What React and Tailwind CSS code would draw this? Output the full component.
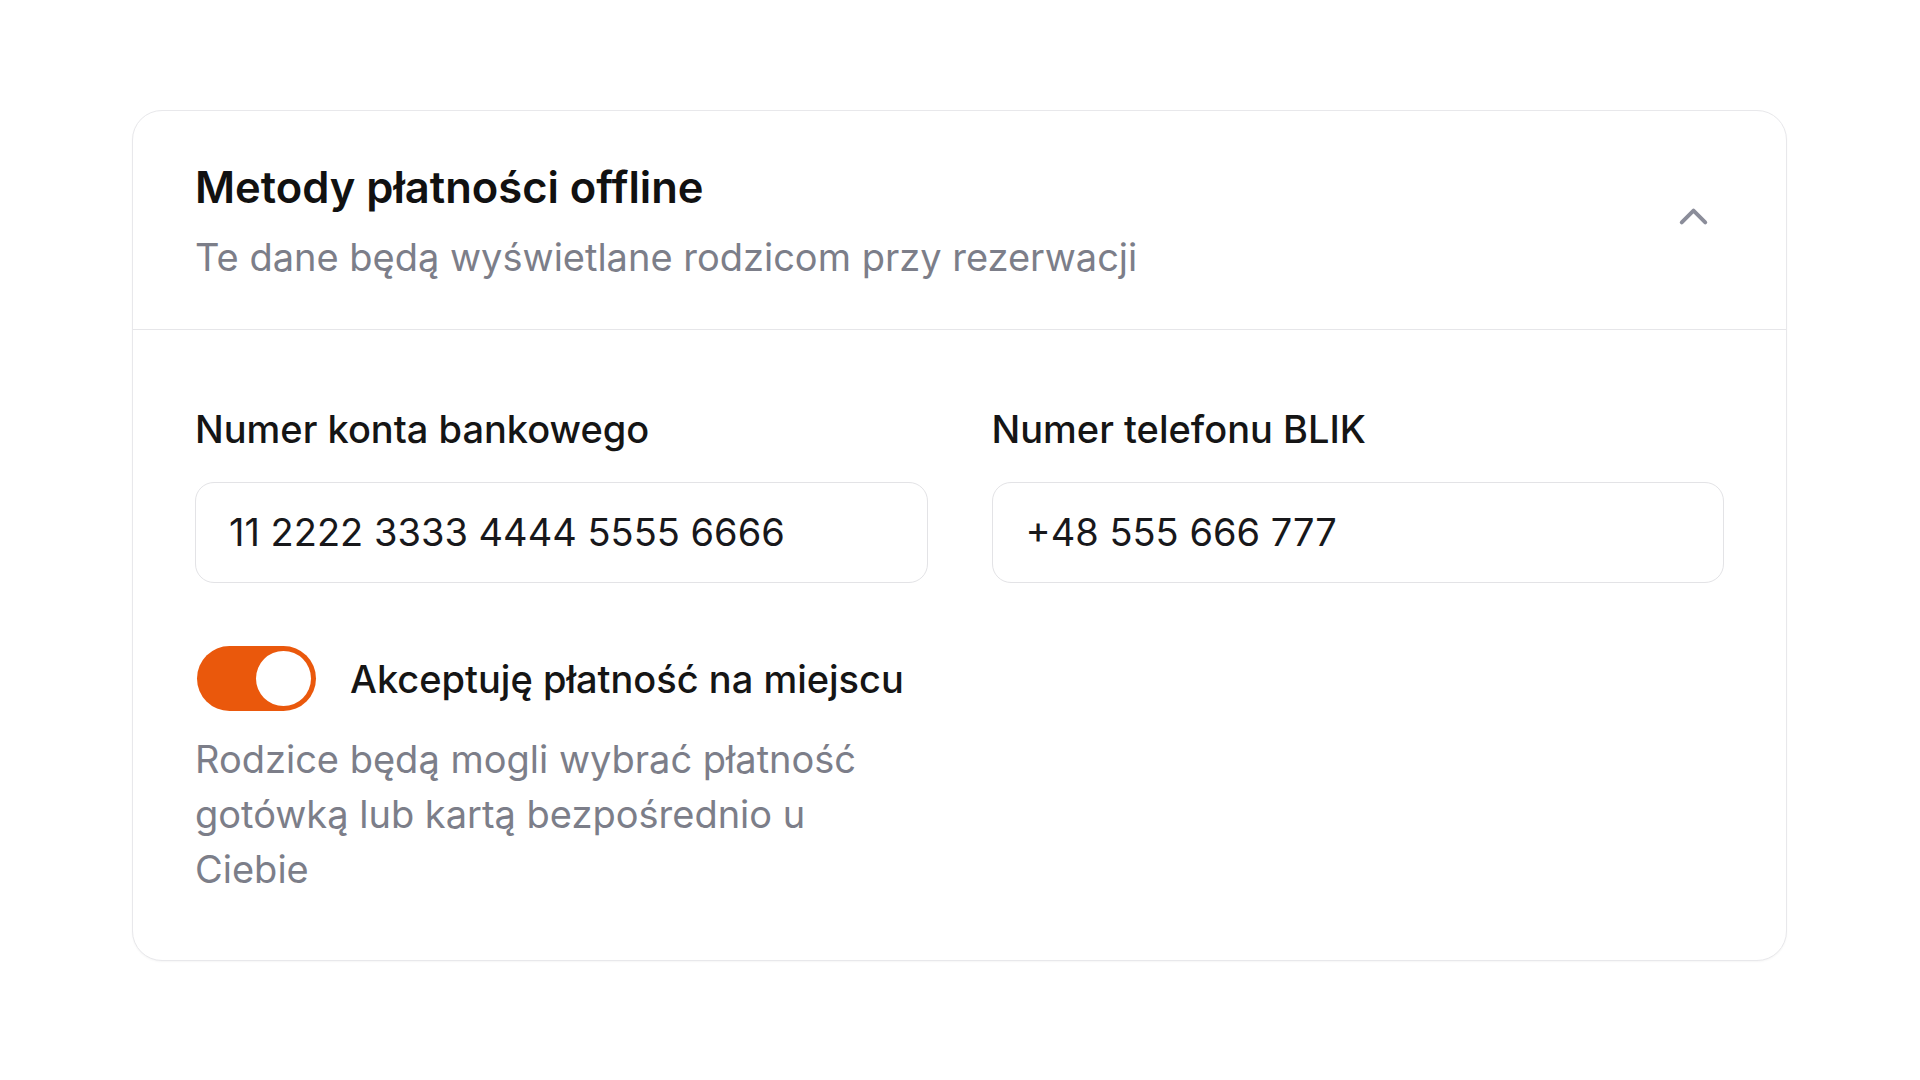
import React from "react";

function ChevronUp() {
  return (
    <svg width="47" height="47" viewBox="0 0 24 24" fill="none" stroke="#8b8d9a" strokeWidth="2" strokeLinecap="round" strokeLinejoin="round">
      <path d="m18 15-6-6-6 6" />
    </svg>
  );
}

export default function App() {
  return (
    <div className="min-h-screen w-full bg-white pt-[110px] pl-[132px]" style={{ fontFamily: "Inter, 'Noto Sans', sans-serif" }}>
      <div className="w-[1655px] rounded-[30px] border border-[#e8e8eb] bg-white shadow-[0_1px_2px_rgba(0,0,0,0.04)]">
        <div className="flex items-center justify-between border-b border-[#e6e6e9] px-[62px] py-[44px]">
          <div>
            <h2 className="text-[43.5px] leading-[65px] font-semibold text-[#111111]">Metody płatności offline</h2>
            <p className="mt-[9px] text-[38px] leading-[56px] text-[#7c7e89]">Te dane będą wyświetlane rodzicom przy rezerwacji</p>
          </div>
          <button className="mb-[7px] p-[7px]">
            <ChevronUp />
          </button>
        </div>
        <div className="px-[62px] pt-[75px] pb-[63px]">
          <div className="grid grid-cols-2 gap-x-[64px]">
            <div>
              <label className="block text-[38px] leading-[48px] font-medium text-[#151515]">Numer konta bankowego</label>
              <div className="mt-[29px] flex h-[101px] items-center rounded-[19px] border border-[#e3e3e6] px-[33px] text-[38px] text-[#18181b]">
                11 2222 3333 4444 5555 6666
              </div>
            </div>
            <div>
              <label className="block text-[38px] leading-[48px] font-medium text-[#151515]">Numer telefonu BLIK</label>
              <div className="mt-[29px] flex h-[101px] items-center rounded-[19px] border border-[#e3e3e6] px-[33px] text-[38px] text-[#18181b]">
                +48 555 666 777
              </div>
            </div>
          </div>
          <div className="mt-[63px] ml-[2px] flex items-center gap-[34px]">
            <div className="flex h-[65px] w-[119px] items-center justify-end rounded-full bg-[#ea580c] pr-[5px]">
              <div className="h-[55px] w-[55px] rounded-full bg-white" />
            </div>
            <span className="text-[38px] leading-[56px] font-medium text-[#151515]">Akceptuję płatność na miejscu</span>
          </div>
          <p className="mt-[21px] max-w-[710px] text-[38px] leading-[55px] text-[#7c7e89]">
            Rodzice będą mogli wybrać płatność gotówką lub kartą bezpośrednio u Ciebie
          </p>
        </div>
      </div>
    </div>
  );
}
